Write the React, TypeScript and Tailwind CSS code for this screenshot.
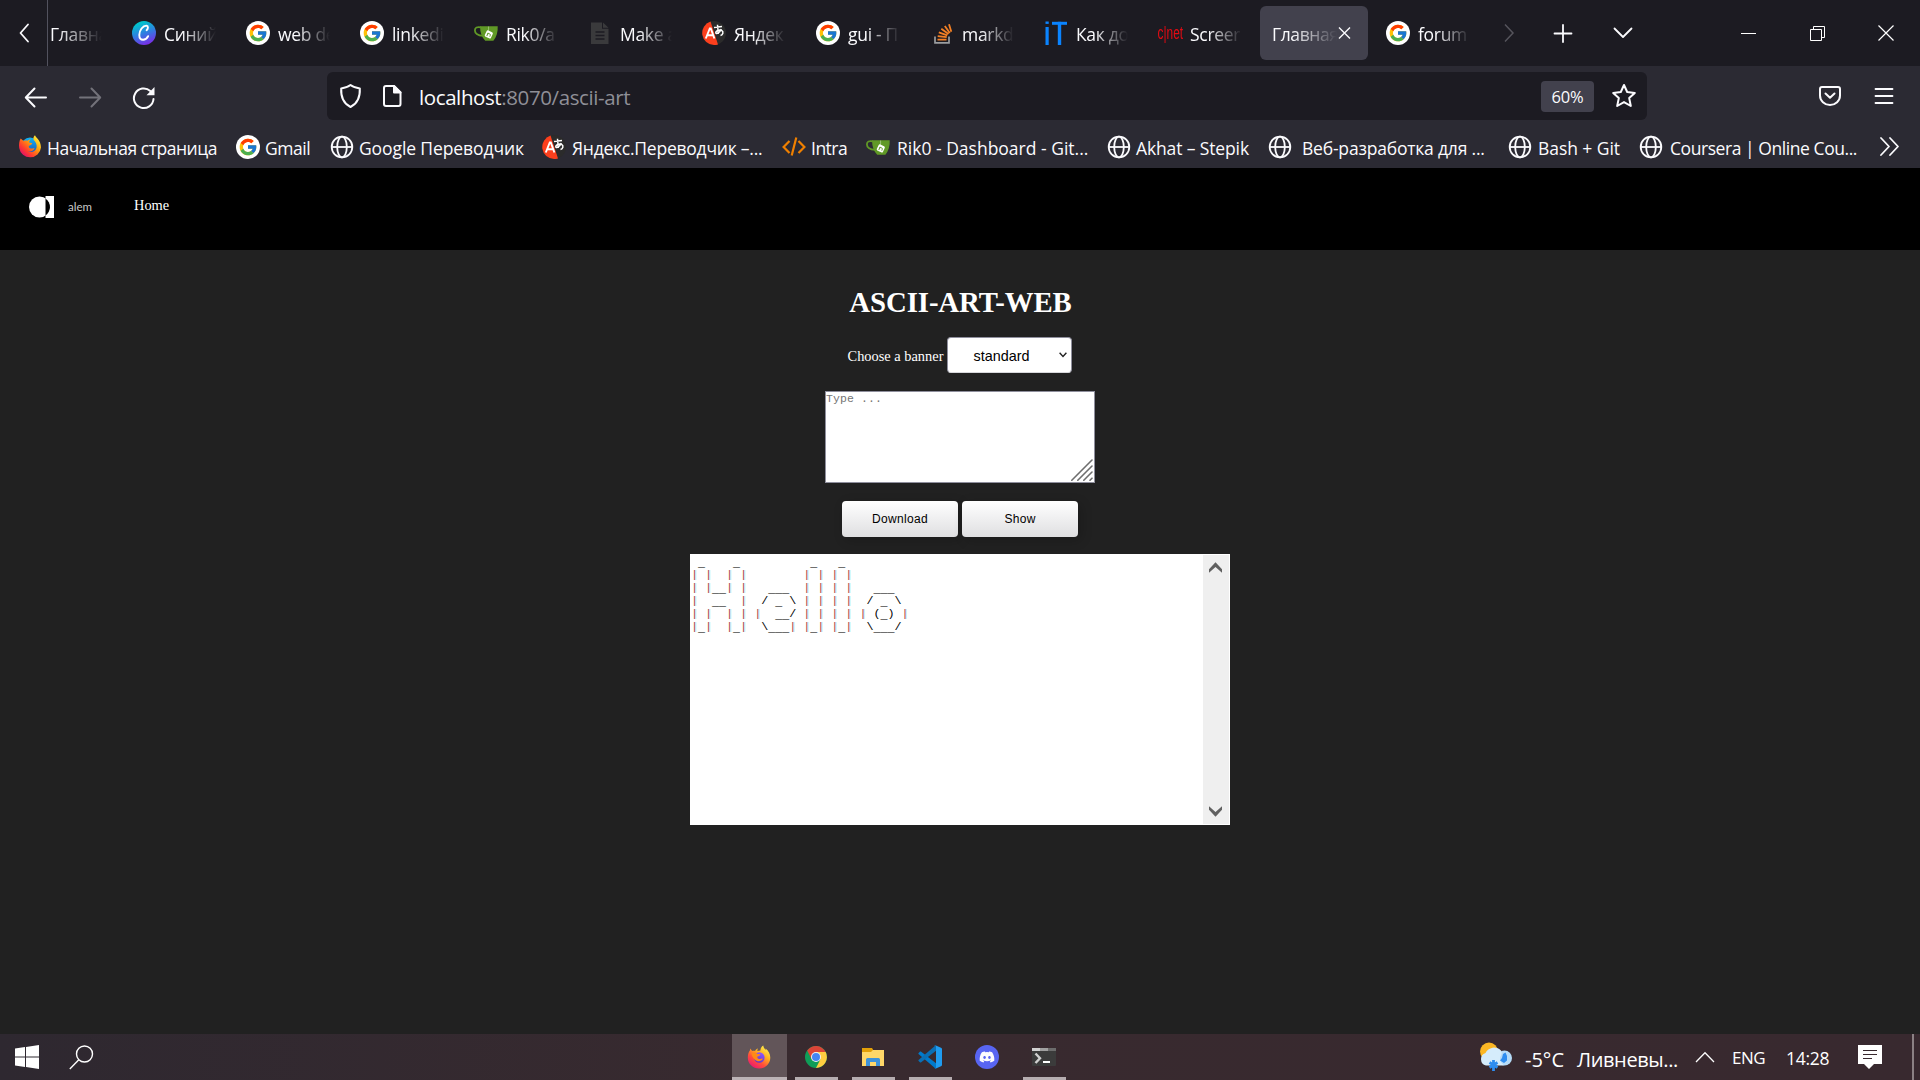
import React from "react";
import { FcGoogle } from "react-icons/fc";
import { FaDiscord } from "react-icons/fa";

type IconName = "canva" | "google" | "gitea" | "doc" | "yandex" | "stack" | "it" | "cnet" | "firefox" | "globe" | "code";

function GoogleIcon() {
  return (
    <span className="flex size-6 items-center justify-center rounded-full bg-white">
      <FcGoogle size={20} />
    </span>
  );
}

function CanvaIcon() {
  return (
    <span className="flex size-6 items-center justify-center rounded-full bg-[linear-gradient(160deg,#00c4cc_15%,#2f7fe0_50%,#7d2ae8_90%)]">
      <svg width="16" height="18" viewBox="0 0 16 18" fill="none" stroke="#fff" strokeLinecap="round">
        <path d="M10.600 6.200c1.600-1.400 2-4.400-.2-4.600C6.900 1.600 3.300 6.300 3.300 11c0 3 1.500 4.800 3.800 4.800 2.200 0 3.900-1.500 5-3.600" strokeWidth="1.900" />
      </svg>
    </span>
  );
}

function GiteaIcon() {
  return (
    <svg width="24" height="24" viewBox="0 0 24 24">
      <path d="M6.800 6.300C3 5.700.9 6.500.9 9.300c0 3.600 3.300 5.300 8.300 5.600" fill="none" stroke="#609926" strokeWidth="1.800" />
      <path d="M6 5.200h17.700c.3 5-1 10.500-4.300 14.500H11.200C8 16.500 6 11.500 6 5.200z" fill="#609926" />
      <path d="M14.600 5.500v5.500" stroke="#b9d59b" strokeWidth=".7" />
      <rect x="11.400" y="10" width="6.800" height="6.800" rx="1.400" fill="#fff" transform="rotate(25 14.800 13.400)" />
      <path d="M14 11.800l-1.200 3.300M14 12.600c3 .2 2.600 1.200 1.800 3" fill="none" stroke="#609926" strokeWidth="1" />
    </svg>
  );
}

function DocIcon() {
  return (
    <svg width="24" height="24" viewBox="0 0 24 24">
      <path d="M3 1.500h11v6.300h6.500V23H3z" fill="#3a3a3c" />
      <path d="M15 1.500l5.500 5.300H15z" fill="#3a3a3c" />
      <path d="M7.500 11h9M7.500 14.500h9M7.500 18h9" stroke="#1c1b22" strokeWidth="1.300" />
    </svg>
  );
}

function YandexIcon() {
  return (
    <svg width="24" height="24" viewBox="0 0 24 24">
      <circle cx="12" cy="12" r="12" fill="#2b2b2b" />
      <path d="M8.500.6A12 12 0 0 0 12 24c1.500 0 2.700-.2 4-.6z" fill="#fc3f1d" />
      <path d="M3.800 17.500L7.800 7.500h1l3.600 10M5 14.300h6" fill="none" stroke="#fff" strokeWidth="1.900" />
      <path d="M12 6.600l8-1.200M15.500 3.700l.8 9.300M19.300 8c-1.500 3.500-4 5-5.300 4.300-1-1.800 3-4.300 5.600-3 2.400 1.400 1.300 4.600-1.100 5.200" fill="none" stroke="#fff" strokeWidth="1.500" />
    </svg>
  );
}

function StackIcon() {
  return (
    <svg width="24" height="24" viewBox="0 0 24 24" fill="none">
      <path d="M5 15.500v6.300h14v-6.300" stroke="#9a9da0" strokeWidth="1.700" />
      <path d="M7.500 18.600h9M7.700 15.100l9 1M8.800 11.300l8.500 3M11.300 7.700l7.200 5.300M14.800 5l5 7M19 3.300l2.300 7.400" stroke="#f48024" strokeWidth="1.800" />
    </svg>
  );
}

function ItIcon() {
  return (
    <svg width="24" height="24" viewBox="0 0 24 24" fill="#0a84ff">
      <rect x="1.500" y="0.500" width="3.200" height="2.400" />
      <rect x="1.500" y="6" width="3.200" height="18" />
      <rect x="8" y="0.800" width="15" height="3" />
      <rect x="13.800" y="0.800" width="3.400" height="23.200" />
    </svg>
  );
}

function CnetIcon() {
  return (
    <span className="flex h-6 w-6 items-center justify-center whitespace-nowrap font-['Liberation_Sans',sans-serif] text-[18px] leading-6 text-[#e30b13]">
      <span className="scale-x-[.66]">c|net</span>
    </span>
  );
}

function FirefoxIcon() {
  return (
    <svg width="24" height="24" viewBox="0 0 24 24">
      <defs>
        <linearGradient id="ffBody" x1=".85" y1=".05" x2=".2" y2="1">
          <stop offset="0" stopColor="#fff34f" />
          <stop offset=".35" stopColor="#ffae1f" />
          <stop offset=".65" stopColor="#ff4f3a" />
          <stop offset="1" stopColor="#e8107a" />
        </linearGradient>
        <linearGradient id="ffCore" x1=".7" y1="0" x2=".3" y2="1">
          <stop offset="0" stopColor="#9059ff" />
          <stop offset="1" stopColor="#5a35c9" />
        </linearGradient>
      </defs>
      <path d="M3.600 3.400c.4 1.300 1 2 1.700 2.600.8-.3 1.800-.3 2.700 0C8.800 4.700 10 3.900 11 3.600c-.6 1-.7 1.800-.6 2.400l3-.5C13.500 3.300 14.600 1.500 16.300.6c.2 2.100 1.200 3.200 2.500 4.500 0-.5 0-1-.3-1.600 3 1.900 4.800 5.400 4.800 9.200A11.200 11.200 0 0 1 12 23.600 11.200 11.200 0 0 1 .8 12.400C.8 9 2 6.600 2.900 5.600c0-.8.300-1.500.7-2.200z" fill="url(#ffBody)" />
      <circle cx="12.300" cy="12.500" r="5.300" fill="url(#ffCore)" />
      <path d="M4.500 8.200c2.600-1.500 4.800-.6 6 .8l3 .3c-.3 1.500-1.700 2-3 2.300-.7.700.3 2.600 2.400 2.400 1.200-.2 2-.9 3-.2-.9 2.200-4 3.200-6.400 2-2.800-1.300-4.500-4.200-5-7.600z" fill="#ff8a16" />
    </svg>
  );
}

function FirefoxClassicIcon() {
  return (
    <svg width="24" height="24" viewBox="0 0 24 24">
      <defs>
        <linearGradient id="fcBody" x1=".9" y1=".1" x2=".15" y2=".9">
          <stop offset="0" stopColor="#fff13a" />
          <stop offset=".4" stopColor="#ff9a0c" />
          <stop offset=".75" stopColor="#ff3b2f" />
          <stop offset="1" stopColor="#e0106a" />
        </linearGradient>
        <linearGradient id="fcGlobe" x1=".5" y1="0" x2=".5" y2="1">
          <stop offset="0" stopColor="#12b5f2" />
          <stop offset="1" stopColor="#1a49b8" />
        </linearGradient>
      </defs>
      <circle cx="12" cy="11.500" r="9" fill="url(#fcGlobe)" />
      <path d="M2.700 3.500L5.600 6c1.200-.6 2.500-.6 3.800-.2L12.500 4c-.6 1.400-1.500 2.300-1.300 3.500l3 .8c-.2 1.700-2.400 2-3.400 2.700-.3 1 .5 2.500 2.500 2.600 1.400 0 2.400-.8 3.300-.2-1.600 3-5 3.600-7.200 2.400 3.600 2.700 8.500.7 9.200-3.300.5-3.500-1-5.300-2.900-7.500C15 3.300 15.500 1.500 17 .3c.8 2.500 5.900 5 6 12.200A11 11 0 0 1 1.200 13C.7 9.500 1.300 5.500 2.700 3.500z" fill="url(#fcBody)" />
    </svg>
  );
}

function GlobeIcon() {
  return (
    <svg width="24" height="24" viewBox="0 0 24 24" fill="none" stroke="#fbfbfe" strokeWidth="1.800">
      <circle cx="12" cy="12" r="10.300" />
      <ellipse cx="12" cy="12" rx="4.800" ry="10.300" />
      <path d="M1.700 12h20.600" />
    </svg>
  );
}

function CodeIcon() {
  return (
    <svg width="24" height="24" viewBox="0 0 24 24" fill="none" stroke="#f08000" strokeWidth="2.200">
      <path d="M7.500 6L1.600 12l5.900 6M16.500 6l5.900 6-5.900 6M14.300 2.500L9.700 20.500" />
    </svg>
  );
}

function Icon({ name }: { name: IconName }) {
  switch (name) {
    case "canva": return <CanvaIcon />;
    case "google": return <GoogleIcon />;
    case "gitea": return <GiteaIcon />;
    case "doc": return <DocIcon />;
    case "yandex": return <YandexIcon />;
    case "stack": return <StackIcon />;
    case "it": return <ItIcon />;
    case "cnet": return <CnetIcon />;
    case "firefox": return <FirefoxClassicIcon />;
    case "globe": return <GlobeIcon />;
    case "code": return <CodeIcon />;
  }
}

const tabs: { icon?: IconName; text: string; active?: boolean }[] = [
  { icon: "canva", text: "Синий" },
  { icon: "google", text: "web de" },
  { icon: "google", text: "linkedi" },
  { icon: "gitea", text: "Rik0/a" },
  { icon: "doc", text: "Make a" },
  { icon: "yandex", text: "Яндек" },
  { icon: "google", text: "gui - П" },
  { icon: "stack", text: "markd" },
  { icon: "it", text: "Как до" },
  { icon: "cnet", text: "Screer" },
  { text: "Главная", active: true },
  { icon: "google", text: "forum" },
];

const bookmarks: { icon: IconName; text: string; box: string; label: string }[] = [
  { icon: "firefox", text: "Начальная страница", box: "w-[218px] gap-[5px]", label: "tracking-[-0.46px]" },
  { icon: "google", text: "Gmail", box: "w-[94px] gap-[5px]", label: "tracking-[-0.45px]" },
  { icon: "globe", text: "Google Переводчик", box: "w-[212px] gap-[5px]", label: "tracking-[-0.1px]" },
  { icon: "yandex", text: "Яндекс.Переводчик –...", box: "w-60 gap-1.5", label: "tracking-[-0.24px]" },
  { icon: "code", text: "Intra", box: "w-[84px] gap-[5px]", label: "tracking-[-0.5px]" },
  { icon: "gitea", text: "Rik0 - Dashboard - Git...", box: "w-[241px] gap-[7px]", label: "" },
  { icon: "globe", text: "Akhat – Stepik", box: "w-[161px] gap-[5px]", label: "tracking-[-0.13px]" },
  { icon: "globe", text: "Веб-разработка для ...", box: "w-60 gap-2.5", label: "tracking-[-0.2px]" },
  { icon: "globe", text: "Bash + Git", box: "w-[131px] gap-1.5", label: "tracking-[-0.06px]" },
  { icon: "globe", text: "Coursera | Online Cou...", box: "w-[233px] gap-[7px]", label: "tracking-[-0.44px]" },
];

function TabBar() {
  return (
    <div className="flex h-[66px] bg-[#1c1b22]">
      <div className="flex w-12 shrink-0 items-center justify-center border-r border-[#52525e]">
        <svg width="14" height="24" viewBox="0 0 14 24" fill="none" stroke="#fbfbfe" strokeWidth="1.800" strokeLinecap="round" strokeLinejoin="round">
          <path d="M11 3.500L3.500 12l7.500 8.500" />
        </svg>
      </div>
      <div className="flex w-[69px] shrink-0 items-center pt-px pl-0.5">
        <span className="w-[52px] whitespace-nowrap tracking-[-0.3px] [mask-image:linear-gradient(to_right,black_15%,transparent)]">Главна</span>
      </div>
      {tabs.map((t, i) => (
        <div key={i} className="flex w-[114px] shrink-0 items-center px-[3px]">
          <div className={t.active ? "flex h-[54px] w-[108px] items-center rounded-md bg-[#42414d] pl-3" : "flex h-[54px] w-[108px] items-center gap-2 px-3"}>
            {t.icon && <span className="shrink-0"><Icon name={t.icon} /></span>}
            <span className={t.active
              ? "w-[65px] pt-px whitespace-nowrap tracking-[-0.4px] [mask-image:linear-gradient(to_right,black_30%,transparent)]"
              : "w-[52px] pt-px whitespace-nowrap tracking-[-0.3px] [mask-image:linear-gradient(to_right,black_35%,transparent)]"}>{t.text}</span>
            {t.active && (
              <svg width="16" height="16" viewBox="0 0 16 16" stroke="#fbfbfe" strokeWidth="1.400">
                <path d="M2 2.500l11 11M13 2.500l-11 11" />
              </svg>
            )}
          </div>
        </div>
      ))}
      <div className="flex w-[47px] items-center justify-center">
        <svg width="12" height="24" viewBox="0 0 12 24" fill="none" stroke="#55545c" strokeWidth="1.500">
          <path d="M2 3.500L10 12l-8 8.500" />
        </svg>
      </div>
      <div className="flex w-[61px] items-center justify-center">
        <svg width="20" height="20" viewBox="0 0 20 20" stroke="#fbfbfe" strokeWidth="1.800" strokeLinecap="round">
          <path d="M1.500 10.500h17M10 2v17" />
        </svg>
      </div>
      <div className="flex w-[60px] items-center justify-center">
        <svg width="20" height="12" viewBox="0 0 20 12" fill="none" stroke="#fbfbfe" strokeWidth="1.800" strokeLinecap="round" strokeLinejoin="round">
          <path d="M1.500 1.500L10 10l8.500-8.500" />
        </svg>
      </div>
      <div className="ml-auto flex w-[69px] items-center justify-center"><span className="h-px w-[15px] bg-white" /></div>
      <div className="flex w-[69px] items-center justify-center">
        <svg width="15" height="15" viewBox="0 0 15 15" fill="none" stroke="#fff">
          <path d="M.5 3.500h11v11H.5zM3.500 3.500v-3h11v11h-3" />
        </svg>
      </div>
      <div className="flex w-[68px] items-center justify-center">
        <svg width="16" height="16" viewBox="0 0 16 16" stroke="#fff" strokeWidth="1.200">
          <path d="M.5.5l15 15M15.500.5l-15 15" />
        </svg>
      </div>
    </div>
  );
}

function Toolbar() {
  return (
    <div className="flex h-[54px] items-end bg-[#2b2a33]">
      <div className="flex h-12 w-[327px] items-center pt-px pl-[23px]">
        <svg width="26" height="24" viewBox="0 0 26 24" fill="none" stroke="#fbfbfe" strokeWidth="2" strokeLinecap="round" strokeLinejoin="round">
          <path d="M23 12.500H3M11.500 3.500L2.800 12.500l8.700 9" />
        </svg>
        <svg className="ml-7" width="26" height="24" viewBox="0 0 26 24" fill="none" stroke="#73727a" strokeWidth="2" strokeLinecap="round" strokeLinejoin="round">
          <path d="M3 12.500h20M14.500 3.500l8.700 9-8.700 9" />
        </svg>
        <svg className="ml-[29px]" width="24" height="26" viewBox="0 0 24 26" fill="none">
          <path d="M21.500 15A9.800 9.800 0 1 1 18.300 7" stroke="#fbfbfe" strokeWidth="2" strokeLinecap="round" />
          <path d="M22.500 3v8.200h-8z" fill="#fbfbfe" />
        </svg>
      </div>
      <div className="flex h-12 w-[1320px] items-center rounded-md bg-[#1c1b22] pl-3">
        <svg width="23" height="26" viewBox="0 0 23 26" fill="none" stroke="#fbfbfe" strokeWidth="2" strokeLinejoin="round">
          <path d="M11.500 2c2.500 2 5.500 2.900 9.300 3.400C21.300 14.500 17.500 21 11.500 24 5.500 21 1.700 14.500 2.200 5.400 6 4.900 9 4 11.500 2z" />
        </svg>
        <svg className="ml-5" width="20" height="24" viewBox="0 0 20 24" fill="none" stroke="#fbfbfe" strokeWidth="2" strokeLinejoin="round">
          <path d="M4 2h8l6.500 6.500V20a2 2 0 0 1-2 2H4a2 2 0 0 1-2-2V4a2 2 0 0 1 2-2z" />
          <path d="M12 2v6.500h6.500z" fill="#fbfbfe" />
        </svg>
        <span className="ml-[17px] pt-0.5 text-[20.500px] tracking-[-0.4px] text-[#8f8f97]"><span className="text-[#fbfbfe]">localhost</span>:8070/ascii-art</span>
        <span className="ml-auto flex h-[31px] w-[53px] items-center justify-center rounded bg-[#42414d] pt-0.5 text-[16.500px] tracking-[-0.2px]">60%</span>
        <svg className="mr-2.5 ml-[17px]" width="26" height="26" viewBox="0 0 26 26" fill="none" stroke="#fbfbfe" strokeWidth="2" strokeLinejoin="round">
          <path d="M13 2l3.200 7 7.600.9-5.600 5.200 1.600 7.900-6.800-3.900L6.200 23l1.600-7.900L2.200 9.900l7.600-.9z" />
        </svg>
      </div>
      <div className="flex h-12 flex-1 items-center justify-end pr-[26px]">
        <svg width="22" height="20" viewBox="0 0 22 20" fill="none" stroke="#fbfbfe" strokeWidth="2" strokeLinecap="round" strokeLinejoin="round">
          <path d="M3 1h16a2 2 0 0 1 2 2v6.500a10 9.500 0 0 1-20 0V3a2 2 0 0 1 2-2z" />
          <path d="M6.500 7.500L11 11.800l4.500-4.300" />
        </svg>
        <svg className="ml-[33px]" width="20" height="18" viewBox="0 0 20 18" stroke="#fbfbfe" strokeWidth="1.800" strokeLinecap="round">
          <path d="M1.500 2h17M1.500 9h17M1.500 16h17" />
        </svg>
      </div>
    </div>
  );
}

function Bookmarks() {
  return (
    <div className="flex h-12 items-center bg-[#2b2a33] pt-1.5 pl-[18px]">
      {bookmarks.map((b) => (
        <div key={b.text} className={`flex shrink-0 items-center whitespace-nowrap ${b.box}`}>
          <Icon name={b.icon} />
          <span className={`pt-px ${b.label}`}>{b.text}</span>
        </div>
      ))}
      <svg className="ml-1.5" width="24" height="24" viewBox="0 0 24 24" fill="none" stroke="#fbfbfe" strokeWidth="1.800" strokeLinecap="round" strokeLinejoin="round">
        <path d="M3 3l8 8.500L3 20M12 3l8 8.500-8 8.500" />
      </svg>
    </div>
  );
}

const art = [
  " _    _          _   _         ",
  "| |  | |        | | | |        ",
  "| |__| |   ___  | | | |   ___  ",
  "|  __  |  / _ \\ | | | |  / _ \\ ",
  "| |  | | |  __/ | | | | | (_) |",
  "|_|  |_|  \\___| |_| |_|  \\___/ ",
];

function glyphClass(run: string) {
  if (run[0] === "|") return "text-[#b04848] [text-shadow:1px_0_#b8f0f0]";
  if (run[0] === "_") return "inline-block translate-y-[1.5px] leading-[13px]";
  return "";
}

function AsciiArt() {
  return (
    <pre className="pt-px font-['Liberation_Mono',monospace] text-[11.700px] leading-[13px] text-black">
      {art.map((line, i) => (
        <div key={i} className="h-[13px]">
          {line.match(/\|+|_+|[^|_]+/g)!.map((run, j) => (
            <span key={j} className={glyphClass(run)}>{run}</span>
          ))}
        </div>
      ))}
    </pre>
  );
}

function Page() {
  return (
    <div className="flex h-[866px] flex-col bg-[#212121] font-['Liberation_Serif',serif] text-[14.400px] text-white">
      <nav className="flex h-[82px] shrink-0 items-center bg-black pl-[29px]">
        <svg className="mb-1" width="25" height="22" viewBox="0 0 25 22">
          <rect x="16.500" y="0" width="8.500" height="22" fill="#fff" />
          <circle cx="10.500" cy="11" r="10.500" fill="#fff" />
          <path d="M16.500 2.400a10.500 10.500 0 0 1 0 17.200z" fill="#000" />
        </svg>
        <span className="mb-1 ml-3.5 w-[66px] font-['Lato',sans-serif] text-[11.500px] leading-4 text-[#c9c9c9]">alem</span>
        <span className="mb-2">Home</span>
      </nav>
      <main className="flex flex-col items-center pt-[34px]">
        <h1 className="pl-px text-[28.800px] leading-9 font-bold tracking-[-0.1px]">ASCII-ART-WEB</h1>
        <div className="mt-[17px] flex h-9 items-center gap-1">
          <span className="pt-0.5">Choose a banner</span>
          <div className="flex h-9 w-[125px] items-center rounded border border-[#8f8f9d] border-b-[#d8d8dc] bg-white pr-1 pl-[25px] font-['Liberation_Sans',sans-serif] text-black">
            <span className="pt-px">standard</span>
            <svg className="ml-auto" width="8" height="6" viewBox="0 0 8 6" fill="none" stroke="#222" strokeWidth="1.400">
              <path d="M.6.8L4 4.400 7.400.8" />
            </svg>
          </div>
        </div>
        <div className="mt-[18px] flex h-[92px] w-[270px] justify-between border border-[#8f8f9d] bg-white">
          <span className="font-['Liberation_Mono',monospace] text-[11.500px] leading-[14px] tracking-[0.100px] text-[#757575]">Type ...</span>
          <svg className="mr-px mb-px self-end" width="22" height="22" viewBox="0 0 22 22" stroke="#6e6e6e" strokeWidth="1.600" strokeLinecap="round">
            <path d="M.8 21.200L21 1M6.800 21.200L21 7M12.800 21.200L21 13M19 21.200l2-2" />
          </svg>
        </div>
        <div className="mt-[18px] flex gap-1 font-['Liberation_Sans',sans-serif] text-[12px] tracking-[0.300px] text-black">
          {["Download", "Show"].map((label) => (
            <button key={label} className="h-9 w-[116px] rounded bg-linear-to-b from-white to-[#dfdfe1] shadow-[3px_3px_12px_rgba(0,0,0,0.2)]">{label}</button>
          ))}
        </div>
        <div className="mt-[17px] flex h-[271px] w-[540px] justify-between border border-white bg-white">
          <AsciiArt />
          <div className="flex w-[26px] flex-col items-center justify-between bg-[#efefef] py-[7px]">
            <svg width="14" height="11" viewBox="0 0 14 11" fill="#606060">
              <path d="M0 7.300L6.500.3l6.500 7v3.400L6.500 5 0 10.700z" />
            </svg>
            <svg width="14" height="11" viewBox="0 0 14 11" fill="#606060">
              <path d="M0 3.700l6.500 7 6.500-7V.3L6.500 6 0 .3z" />
            </svg>
          </div>
        </div>
      </main>
    </div>
  );
}

function ChromeIcon() {
  return (
    <svg width="22" height="22" viewBox="0 0 22 22">
      <circle cx="11" cy="11" r="11" fill="#0f9d58" />
      <path d="M15.300 13.500L11 22A11 11 0 0 0 20.700 6H11z" fill="#ffcd40" />
      <path d="M11 6h9.700A11 11 0 0 0 2.200 4.400L6.700 13.500z" fill="#db4437" />
      <circle cx="11" cy="11" r="5" fill="#f1f1f1" />
      <circle cx="11" cy="11" r="4" fill="#4285f4" />
    </svg>
  );
}

function ExplorerIcon() {
  return (
    <svg width="24" height="24" viewBox="0 0 24 24">
      <path d="M1 3h10l1.500 2.500L10 8H1z" fill="#e3a008" />
      <path d="M1 7h9l2-2h11v16H1z" fill="#ffd768" />
      <path d="M5 21v-6.500A1.500 1.500 0 0 1 6.500 13h11a1.500 1.500 0 0 1 1.500 1.500V21h-4v-4H9v4z" fill="#3f93d8" />
    </svg>
  );
}

function CodeEditorIcon() {
  return (
    <svg width="24" height="24" viewBox="0 0 24 24">
      <path d="M.4 8.200l1.500-1.500c.4-.3.900-.3 1.300 0L18 18.300V24L.5 8.900z" fill="#007acc" />
      <path d="M.4 15.800l1.500 1.500c.4.300.9.300 1.300 0L18 5.700V0L.5 15.100z" fill="#0a6fb5" />
      <path d="M17.300.2L23 2.700c.6.300 1 .8 1 1.400v15.800c0 .6-.4 1.100-1 1.400l-5.700 2.500c-.6.200-1 .1-1.300-.2.700.5 2 .1 2-1V1.400c0-1-1.200-1.600-2-1 .3-.3.800-.4 1.300-.2z" fill="#1f9cf0" />
    </svg>
  );
}

function TerminalIcon() {
  return (
    <svg width="24" height="18" viewBox="0 0 24 18">
      <rect width="24" height="18" rx="1" fill="#3b3b3b" />
      <path d="M0 0h8v3H0z" fill="#d0d0d0" />
      <path d="M8 0h8v3H8z" fill="#a0a0a0" />
      <path d="M16 0h8v3h-8z" fill="#6c6c6c" />
      <path d="M3.500 5.500L8 10.200 3.500 15" fill="none" stroke="#d0d0d0" strokeWidth="2.400" />
      <path d="M11 14h7" stroke="#fff" strokeWidth="2" />
    </svg>
  );
}

function WeatherIcon() {
  return (
    <svg width="34" height="30" viewBox="0 0 34 30">
      <circle cx="10" cy="9.500" r="9" fill="#fbb724" />
      <circle cx="25.500" cy="16" r="7.500" fill="#b5dbf7" />
      <path d="M7 23.500a6.500 6.500 0 0 1-.5-12.500A9.500 9.500 0 0 1 22 8.500c2 4-1 5-1 8s2 5 4 7z" fill="#d5ecfb" />
      <path d="M24 12l2.500-1.500 1.500 3.500v4.500l-3 2.500-4-2.500 2-2.500z" fill="#2e8df0" />
      <path d="M14.500 18v11M10.500 20.500l8 5M18.500 20.500l-8 5" stroke="#2e8df0" strokeWidth="2.800" />
    </svg>
  );
}

const apps = [
  { name: "chrome", icon: <ChromeIcon />, open: true },
  { name: "explorer", icon: <ExplorerIcon />, open: true },
  { name: "editor", icon: <CodeEditorIcon />, open: true },
  { name: "discord", icon: <span className="flex size-6 items-center justify-center rounded-full bg-[#5865f2]"><FaDiscord size={16} /></span>, open: false },
  { name: "terminal", icon: <TerminalIcon />, open: true },
];

function Taskbar() {
  return (
    <div className="flex h-[46px] bg-linear-to-r from-[#2e2830] via-[#382a2f] via-40% to-[#38292f]">
      <div className="flex w-[732px] items-center pl-[15px]">
        <svg width="24" height="24" viewBox="0 0 24 24" fill="#fff">
          <path d="M0 3.500l10-1.400v9.300H0zM11 1.900L24 0v11.400H11zM0 12.500h10v9.400L0 20.500zM11 12.500h13V24l-13-1.900z" />
        </svg>
        <svg className="ml-[30px]" width="25" height="25" viewBox="0 0 25 25" fill="none" stroke="#fff" strokeWidth="1.400">
          <circle cx="15.500" cy="9" r="8" />
          <path d="M9.800 14.700L.8 24" />
        </svg>
      </div>
      <div className="mr-px flex w-[55px] flex-col items-center justify-between bg-[#625559]">
        <span className="pt-[11px] pr-px"><FirefoxIcon /></span>
        <span className="h-[3px] w-full bg-[#bcb3b6]" />
      </div>
      {apps.map((a) => (
        <div key={a.name} className="flex w-[57px] flex-col items-center justify-between">
          <span className="flex h-[46px] items-center pr-px">{a.icon}</span>
          {a.open && <span className="-mt-[3px] h-[3px] w-[43px] shrink-0 bg-[#b6adb0]" />}
        </div>
      ))}
      <div className="ml-auto flex items-center text-white">
        <WeatherIcon />
        <span className="ml-3 w-[52px] pt-1.5 text-[20px]">-5°C</span>
        <span className="w-[118px] pt-1.5 text-[20px] tracking-[-0.38px]">Ливневы...</span>
        <svg width="20" height="12" viewBox="0 0 20 12" fill="none" stroke="#fff" strokeWidth="1.300">
          <path d="M1 11l9-9.300L19 11" />
        </svg>
        <span className="ml-[17px] w-[54px] pt-px text-[17px] tracking-[-0.54px]">ENG</span>
        <span className="w-[72px] pt-px text-[17.500px] tracking-[-0.3px]">14:28</span>
        <svg width="24" height="24" viewBox="0 0 24 24">
          <path d="M0 0h24v19h-8l-5 5-5-5H0z" fill="#fff" />
          <path d="M5 5.500h14M5 9.500h14M5 13.500h9" stroke="#38292f" strokeWidth="1.200" />
        </svg>
        <span className="mr-1.5 ml-[30px] h-[46px] w-0.5 bg-[#8b8184]" />
      </div>
    </div>
  );
}

export default function App() {
  return (
    <div className="flex h-[1080px] w-[1920px] flex-col overflow-hidden bg-[#212121] font-['Open_Sans',sans-serif] text-[17.500px] leading-6 text-[#fbfbfe]">
      <TabBar />
      <Toolbar />
      <Bookmarks />
      <Page />
      <Taskbar />
    </div>
  );
}
